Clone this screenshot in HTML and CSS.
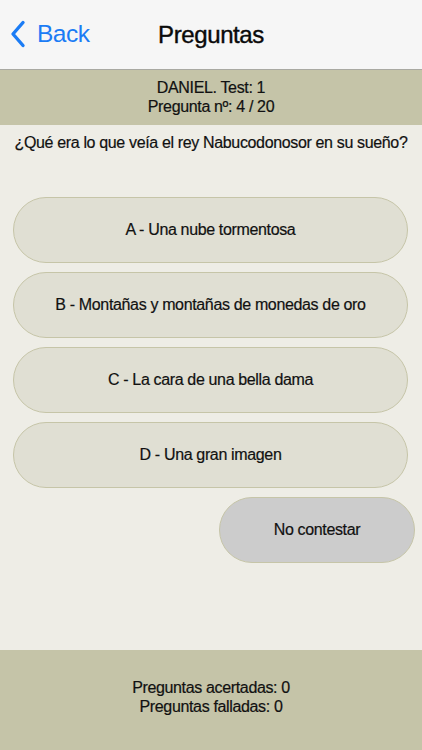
FILE: index.html
```html
<!DOCTYPE html>
<html>
<head>
<meta charset="utf-8">
<meta name="viewport" content="width=device-width, initial-scale=1">
<title>Preguntas</title>
<link rel="stylesheet" href="styles.css">
</head>
<body>
<header class="navbar">
<a class="back" href="#"><svg class="chevron" width="16" height="28" viewBox="0 0 16 28"><path d="M13 2.5 L3 14 L13 25.5" fill="none" stroke="#1b7cf5" stroke-width="3.4" stroke-linecap="round" stroke-linejoin="round"/></svg>Back</a>
<h1>Preguntas</h1>
</header>
<div class="info">
<div>DANIEL. Test: 1</div>
<div>Pregunta nº: 4 / 20</div>
</div>
<main class="content">
<p class="question">¿Qué era lo que veía el rey Nabucodonosor en su sueño?</p>
<ul class="answers">
<li><a href="#">A - Una nube tormentosa</a></li>
<li><a href="#">B - Montañas y montañas de monedas de oro</a></li>
<li><a href="#">C - La cara de una bella dama</a></li>
<li><a href="#">D - Una gran imagen</a></li>
</ul>
<div class="skip-row"><a class="skip" href="#">No contestar</a></div>
</main>
<footer class="stats">
<div>Preguntas acertadas: 0</div>
<div>Preguntas falladas: 0</div>
</footer>
</body>
</html>
```

FILE: styles.css
```css
html,body{margin:0;padding:0;}
body{width:422px;height:750px;display:flex;flex-direction:column;background-color:#eeede6;font-family:"Liberation Sans",Arial,Helvetica,sans-serif;color:#111;font-size:16px;letter-spacing:-0.35px;-webkit-text-stroke:0.2px #111;}
a{text-decoration:none;color:inherit;}
.navbar{height:69px;flex:none;display:flex;align-items:center;justify-content:center;background-color:#f6f6f6;border-bottom:1px solid #a9a9a2;position:relative;}
.navbar h1{margin:0;font-size:24px;font-weight:normal;letter-spacing:-0.4px;color:#0a0a0a;-webkit-text-stroke:0.4px #0a0a0a;}
.back{position:absolute;left:10px;top:20px;display:flex;align-items:center;color:#1b7cf5;font-size:24.5px;letter-spacing:-0.5px;-webkit-text-stroke:0;}
.chevron{margin-right:11px;}
.info{height:55px;flex:none;display:flex;flex-direction:column;justify-content:center;align-items:center;background-color:#c5c4a8;line-height:19px;padding-bottom:2px;box-sizing:border-box;}
.content{flex:1;padding:0 13px 0;}
.question{margin:0;padding-top:8px;text-align:center;line-height:19px;white-space:nowrap;}
.answers{list-style:none;margin:45px 0 0;padding:0;display:flex;flex-direction:column;gap:9px;}
.answers a,.skip{display:flex;align-items:center;justify-content:center;height:64px;border:1px solid #c6c5a8;border-radius:33px;background-color:#e0dfd3;}
.answers a{width:393px;}
.skip-row{display:flex;justify-content:flex-end;margin-top:9px;margin-right:-6px;}
.skip{width:194px;background-color:#cccccc;}
.stats{height:100px;flex:none;display:flex;flex-direction:column;justify-content:center;align-items:center;background-color:#c5c4a8;line-height:19px;padding-bottom:7px;box-sizing:border-box;}
```
